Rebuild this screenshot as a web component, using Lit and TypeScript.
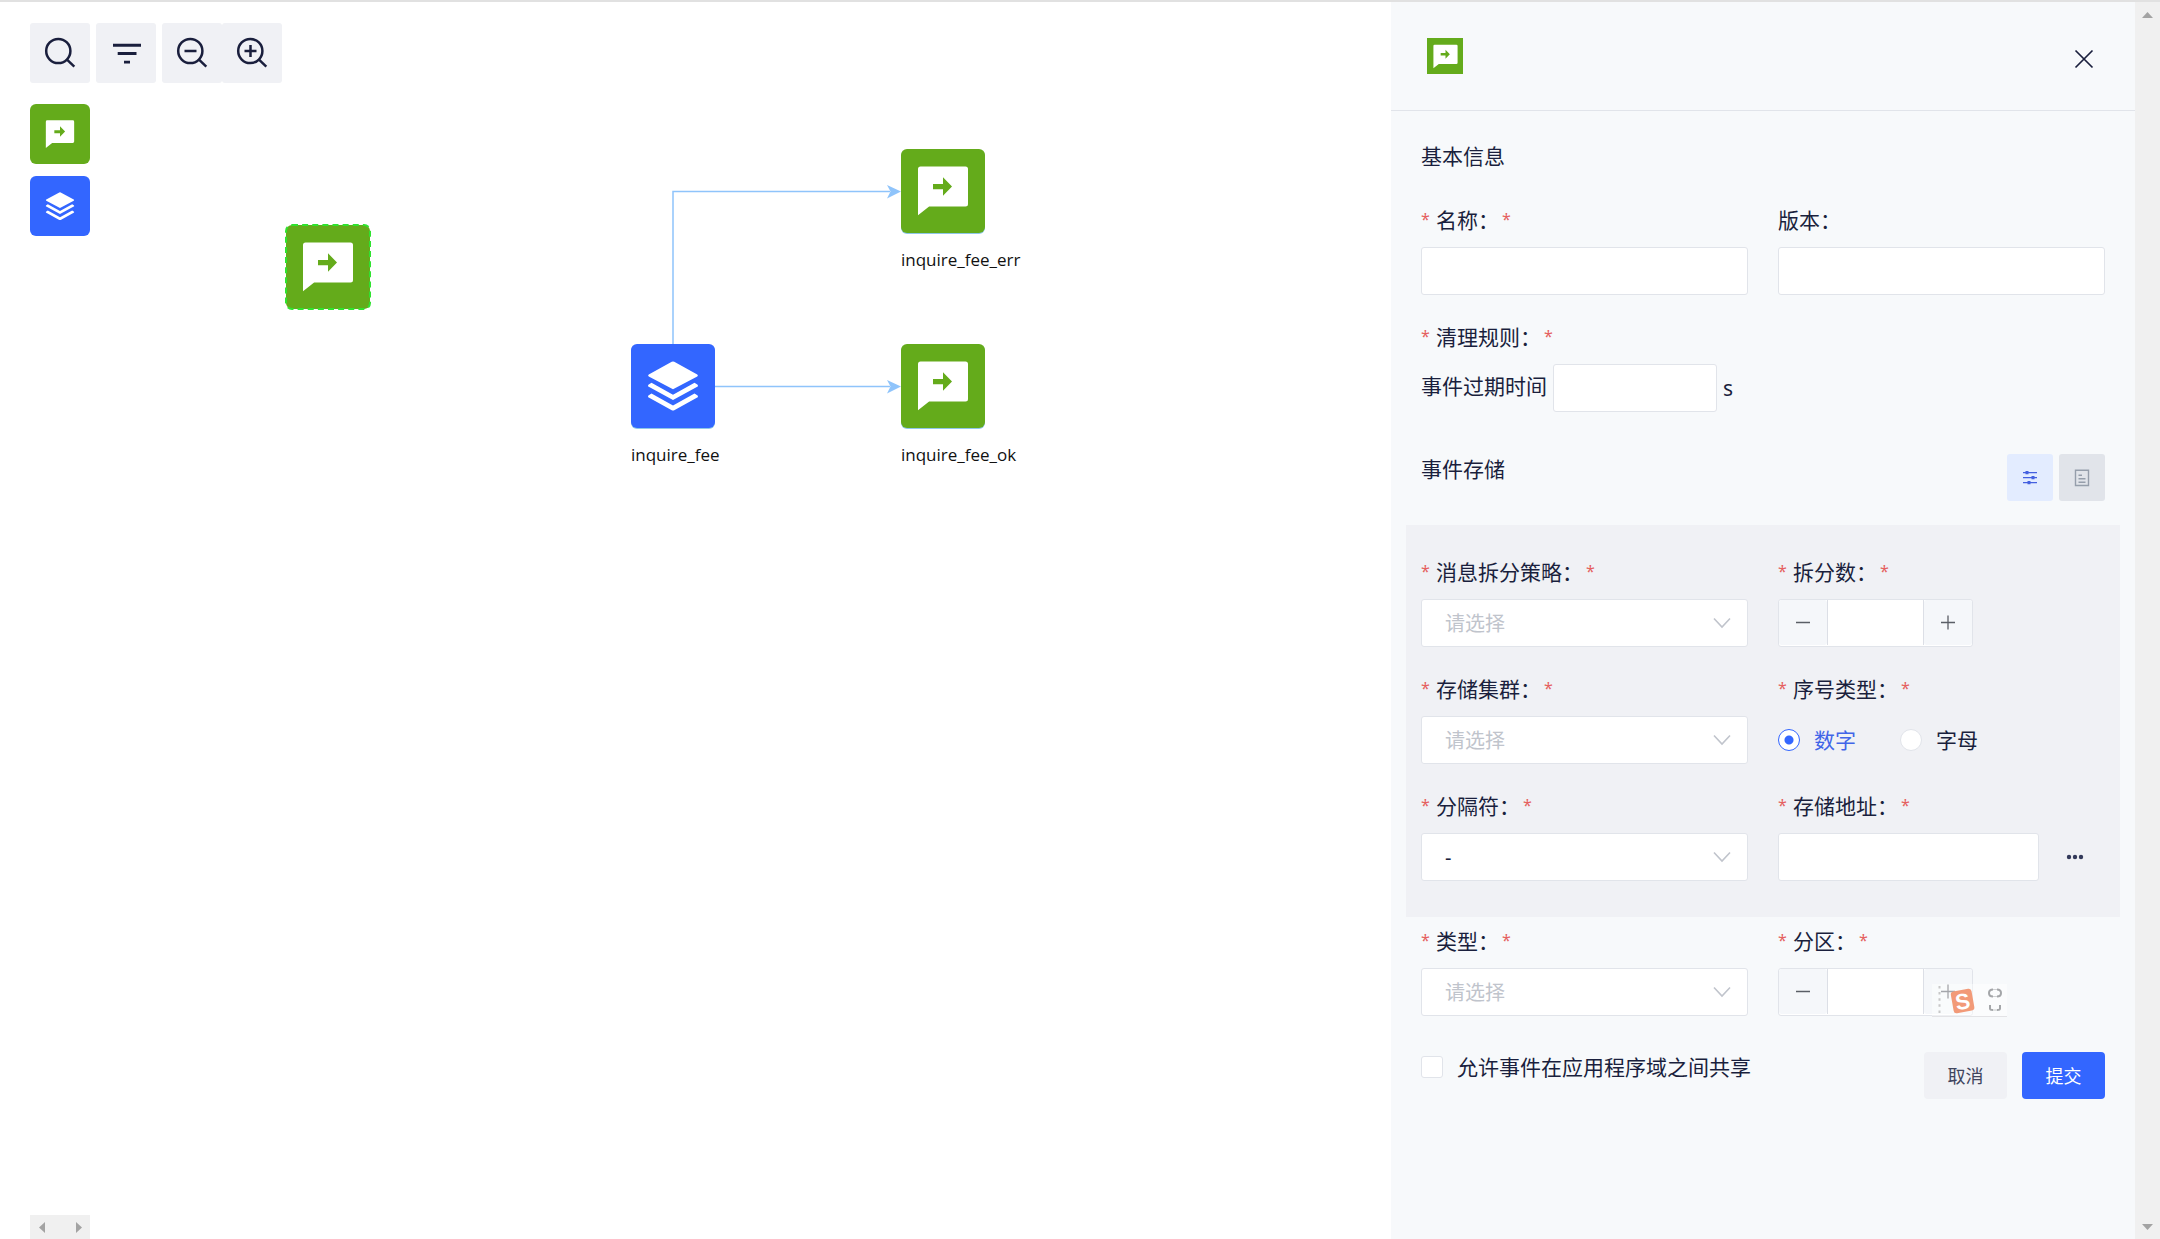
import { LitElement, html, svg, css, nothing, type TemplateResult } from "lit";
import { customElement, state } from "lit/decorators.js";
import { classMap } from "lit/directives/class-map.js";
import { styleMap } from "lit/directives/style-map.js";

type NodeKind = "event" | "stack";

interface FlowNode {
  kind: NodeKind;
  x: number;
  y: number;
  label?: string;
  ghost?: boolean;
}

const NODES: FlowNode[] = [
  { kind: "event", x: 286, y: 223, ghost: true },
  { kind: "event", x: 901, y: 147, label: "inquire_fee_err" },
  { kind: "stack", x: 631, y: 342, label: "inquire_fee" },
  { kind: "event", x: 901, y: 342, label: "inquire_fee_ok" },
];

const eventIcon = html`<svg viewBox="0 0 24 24" fill="currentColor" aria-hidden="true">
  <path fill-rule="evenodd" d="M6.45 19 2 22.5V4a1 1 0 0 1 1-1h18a1 1 0 0 1 1 1v14a1 1 0 0 1-1 1zM12 10H8v2.1h4v2.6L15.6 11 12 7.3z"/>
</svg>`;

const stackIcon = html`<svg viewBox="0 0 24 24" fill="currentColor" aria-hidden="true">
  <path d="M12.5 3.1l9.2 5.1a.5.5 0 0 1 0 .8L12 14.1 2.3 9a.5.5 0 0 1 0-.8l9.2-5.1a1 1 0 0 1 1 0z"/>
  <path d="M3.4 11.5 12 16.3l8.6-4.8 1.1.7a.5.5 0 0 1 0 .9L12 18.4 2.3 13.1a.5.5 0 0 1 0-.9z"/>
  <path d="M3.4 15.8 12 20.6l8.6-4.8 1.1.7a.5.5 0 0 1 0 .9l-9.2 5.1a1 1 0 0 1-1 0l-9.2-5.1a.5.5 0 0 1 0-.9z"/>
</svg>`;

const iconFor = (kind: NodeKind) => (kind === "event" ? eventIcon : stackIcon);

const lens = (inner: unknown = nothing) => html`<svg viewBox="0 0 60 60" fill="none" stroke="currentColor" stroke-width="2.5" aria-hidden="true">
  <circle cx="28.3" cy="28" r="12.1"/><path d="M37 36.7 44.3 43.7"/>${inner}
</svg>`;

const TOOLS: { name: string; icon: TemplateResult; joined?: boolean }[] = [
  { name: "搜索", icon: lens() },
  {
    name: "筛选",
    icon: html`<svg viewBox="0 0 60 60" fill="currentColor" aria-hidden="true">
      <path d="M17 20.8h28v2.9H17zM21.7 29.1h18.8V32H21.7zM28 37.7h6v2.9h-6z"/>
    </svg>`,
  },
  { name: "缩小", icon: lens(svg`<path d="M22.5 28h12"/>`) },
  { name: "放大", icon: lens(svg`<path d="M22.5 28h12M28.5 22v12"/>`), joined: true },
];

@customElement("app-root")
export class AppRoot extends LitElement {
  static styles = css`
    :host {
      display: grid;
      grid-template-columns: minmax(0, 1fr) clamp(480px, 35vw, 744px) 25px;
      min-height: 100vh;
      box-sizing: border-box;
      border-top: 2px solid #e1e1e1;
      background: #fff;
      color: #1a1f3d;
      font-family: "Noto Sans", "Noto Sans CJK SC", sans-serif;
      font-size: 21px;
      line-height: 30px;
    }
    * {
      box-sizing: border-box;
    }
    svg {
      display: block;
    }
    button {
      font: inherit;
      color: inherit;
      border: 0;
      padding: 0;
      display: flex;
      align-items: center;
      justify-content: center;
      cursor: pointer;
    }
    h2 {
      margin: 0;
      height: 32px;
      font-size: 21px;
      font-weight: 400;
    }

    .canvas {
      position: relative;
      display: flex;
      flex-direction: column;
      align-items: flex-start;
      padding: 21px 30px 0;
      overflow: hidden;
    }
    .toolbar {
      display: flex;
      gap: 6px;
    }
    .tool {
      width: 60px;
      height: 60px;
      background: #f0f1f5;
      border-radius: 3px;
    }
    .tool.joined {
      margin-left: -6px;
    }
    .tool svg {
      width: 60px;
      height: 60px;
    }
    .palette {
      display: flex;
      flex-direction: column;
      gap: 12px;
      margin-top: 21px;
    }
    .tile {
      display: flex;
      align-items: center;
      justify-content: center;
      color: #fff;
      background: #64ab1b;
      border-radius: 6px;
      width: 60px;
      height: 60px;
      padding-bottom: 2px;
    }
    .tile.stack {
      background: #3366ff;
    }
    .tile svg {
      width: 34px;
      height: 34px;
    }
    .edges {
      position: absolute;
      left: 0;
      top: 0;
      width: 1000px;
      height: 500px;
      pointer-events: none;
    }
    .node {
      position: absolute;
      color: #111;
      font-family: "Open Sans", "Noto Sans", sans-serif;
      font-size: 17px;
      line-height: 24px;
      white-space: nowrap;
    }
    .node .tile {
      width: 84px;
      height: 84px;
      margin-bottom: 15px;
      padding-bottom: 4px;
      box-shadow: 0 1px 0 #8fc8e8;
    }
    .node .tile svg {
      width: 60px;
      height: 60px;
    }
    .node.ghost .tile {
      outline: 2px dashed #2fe32f;
      outline-offset: -1px;
      box-shadow: none;
    }
    .mini-scroll {
      display: flex;
      justify-content: space-between;
      align-items: center;
      width: 60px;
      height: 24px;
      margin-top: auto;
      padding: 0 8px 0 9px;
      background: #f0f0f0;
      color: #a3a3a3;
    }
    .mini-scroll svg {
      width: 6px;
      height: 11px;
    }

    .panel {
      background: #f7f9fb;
    }
    .panel-head {
      display: flex;
      justify-content: space-between;
      align-items: flex-start;
      padding: 36px 30px 30px 36px;
      border-bottom: 1px solid #e1e4ea;
    }
    .panel-head .tile {
      width: 36px;
      height: 36px;
      border-radius: 0;
    }
    .panel-head .tile svg {
      width: 29px;
      height: 29px;
    }
    .close {
      width: 42px;
      height: 42px;
      background: none;
    }
    .close svg {
      width: 20px;
      height: 20px;
    }
    .form {
      padding: 30px 30px 0;
    }
    .fields {
      display: grid;
      grid-template-columns: repeat(2, minmax(0, 1fr));
      gap: 27px 30px;
    }
    .basic {
      margin-top: 32px;
    }
    .field {
      display: flex;
      flex-direction: column;
      gap: 10px;
    }
    .label {
      display: flex;
      height: 32px;
    }
    .label.required::before,
    .label.required::after {
      content: "*";
      width: 15px;
      color: #e56060;
      font-size: 16px;
      line-height: 28px;
    }
    .label.required::after {
      margin-left: 3px;
    }
    .text,
    .select {
      width: 100%;
      height: 48px;
      border: 1px solid #e1e4ea;
      border-radius: 3px;
      background: #fff;
      font: inherit;
      font-size: 20px;
      color: inherit;
      padding: 2px 23px 0;
      outline: none;
    }
    .select {
      appearance: none;
      grid-area: 1 / 1;
    }
    .select.empty {
      color: #c0c4cc;
    }
    .select-wrap {
      display: grid;
      align-items: center;
    }
    .select-wrap svg {
      grid-area: 1 / 1;
      justify-self: end;
      margin-right: 17px;
      width: 18px;
      height: 12px;
      color: #c0c4cc;
      pointer-events: none;
    }
    .inline {
      display: flex;
      align-items: center;
      gap: 6px;
    }
    .inline label {
      padding-bottom: 4px;
    }
    .inline .text {
      width: 164px;
    }
    .stepper {
      position: relative;
      display: flex;
      width: 195px;
      height: 48px;
      border: 1px solid #e1e4ea;
      border-radius: 3px;
      background: #fff;
    }
    .stepper button {
      flex: 0 0 48px;
      height: 45px;
      background: #f5f7fa;
      color: #5a5e66;
      border-radius: 3px;
    }
    .stepper svg {
      width: 16px;
      height: 16px;
    }
    .stepper input {
      flex: 1;
      min-width: 0;
      height: 45px;
      border: solid #dcdfe6;
      border-width: 0 1px;
      padding: 0;
      font: inherit;
      text-align: center;
      outline: none;
    }
    .stepper .ime {
      position: absolute;
      left: 153px;
      top: 15px;
      width: 75px;
      height: 33px;
      pointer-events: none;
    }
    .storage-head {
      display: flex;
      justify-content: space-between;
      align-items: flex-start;
      margin-top: 42px;
    }
    .modes {
      display: flex;
      gap: 6px;
    }
    .mode {
      width: 46px;
      height: 47px;
      border-radius: 3px;
      background: #e1e4ea;
      color: #959eab;
    }
    .mode.active {
      background: #e3ecff;
      color: #4460e0;
    }
    .mode svg {
      width: 16px;
      height: 18px;
    }
    .storage {
      margin: 24px -15px 9px;
      padding: 32px 15px 36px;
      background: #f0f1f5;
    }
    .radios {
      display: flex;
      align-items: center;
      gap: 44px;
      height: 47px;
    }
    .choice {
      display: flex;
      align-items: center;
      gap: 14px;
    }
    .choice input {
      appearance: none;
      flex: none;
      width: 22px;
      height: 22px;
      margin: 0;
      border: 1px solid #e1e4ea;
      background: #fff;
      border-radius: 3px;
    }
    .choice input[type="radio"] {
      border-radius: 50%;
    }
    .choice input[type="radio"]:checked {
      border-color: #3366ff;
      background: radial-gradient(circle, #3366ff 4px, #fff 5px);
    }
    .choice.on {
      color: #4165e8;
    }
    .address {
      display: flex;
      align-items: center;
      gap: 12px;
    }
    .address .text {
      flex: 1;
      min-width: 0;
    }
    .more {
      width: 48px;
      height: 48px;
      margin-right: 6px;
      background: none;
      color: #33395a;
    }
    .more svg {
      width: 18px;
      height: 6px;
    }
    .foot {
      display: flex;
      justify-content: space-between;
      align-items: flex-start;
      margin-top: 36px;
    }
    .actions {
      display: flex;
      gap: 15px;
    }
    .action {
      width: 83px;
      height: 47px;
      border-radius: 4px;
      background: #f0f1f5;
      color: #40455e;
      font-size: 18px;
    }
    .action.primary {
      background: #3366ff;
      color: #fff;
    }

    .scrollbar {
      display: flex;
      flex-direction: column;
      justify-content: space-between;
      align-items: center;
      padding: 10px 0 9px;
      background: #f0f0f0;
      color: #a3a3a3;
    }
    .scrollbar svg {
      width: 11px;
      height: 6px;
    }
  `;

  @state() private serial = "digit";
  @state() private counts: Record<string, string> = {};
  @state() private storageMode = 0;
  @state() private picks: Record<string, string> = { separator: "-" };

  private bump(id: string, delta: number) {
    const next = Math.max(0, (Number(this.counts[id]) || 0) + delta);
    this.counts = { ...this.counts, [id]: String(next) };
  }

  private label(text: string, id: string, required = true) {
    return html`<label class=${classMap({ label: true, required })} for=${id}>${text}</label>`;
  }

  private textField(text: string, id: string, required = true) {
    return html`<div class="field">${this.label(text, id, required)}<input class="text" id=${id} type="text" /></div>`;
  }

  private selectField(text: string, id: string, options: string[] = []) {
    const value = this.picks[id] ?? "";
    return html`<div class="field">
      ${this.label(text, id)}
      <div class="select-wrap">
        <select
          class=${classMap({ select: true, empty: !value })}
          id=${id}
          @change=${(e: Event) => (this.picks = { ...this.picks, [id]: (e.target as HTMLSelectElement).value })}
        >
          ${options.length ? nothing : html`<option value="">请选择</option>`}
          ${options.map((o) => html`<option value=${o} ?selected=${o === value}>${o}</option>`)}
        </select>
        <svg viewBox="0 0 18 12" fill="none" stroke="currentColor" stroke-width="1.6" aria-hidden="true"><path d="M1 1.5l8 8.5 8-8.5"/></svg>
      </div>
    </div>`;
  }

  private stepField(text: string, id: string, overlay: unknown = nothing) {
    return html`<div class="field">
      ${this.label(text, id)}
      <div class="stepper">
        <button type="button" aria-label="减少" @click=${() => this.bump(id, -1)}>
          <svg viewBox="0 0 16 16" fill="none" stroke="currentColor" stroke-width="1.5"><path d="M1 7.5h14"/></svg>
        </button>
        <input id=${id} type="text" inputmode="numeric" .value=${this.counts[id] ?? ""} />
        <button type="button" aria-label="增加" @click=${() => this.bump(id, 1)}>
          <svg viewBox="0 0 16 16" fill="none" stroke="currentColor" stroke-width="1.3"><path d="M1 7.5h14M8 .5v14"/></svg>
        </button>
        ${overlay}
      </div>
    </div>`;
  }

  private imeBar() {
    return html`<svg class="ime" viewBox="0 0 75 33" aria-hidden="true">
      <rect width="75" height="32" fill="#fff" opacity=".45"/>
      <path d="M0 32.5h75" stroke="#e3e3e6"/>
      <path d="M7.500 2v30" stroke="#c8c8c8" stroke-width="2" stroke-dasharray="2.5 3.6"/>
      <g transform="rotate(-10 30.5 16.5)">
        <rect x="20" y="6" width="21" height="22" rx="3" fill="#f29a78"/>
        <text x="30.5" y="25" text-anchor="middle" font-family="Liberation Sans, sans-serif" font-weight="700" font-size="22" fill="#fff">S</text>
      </g>
      <g fill="none" stroke="#a4a6a9" stroke-width="2">
        <path d="M61 5.500q-4 0-4 3.500t4 3.500M65 5.500q4 0 4 3.500t-4 3.500"/>
        <path d="M61 5.500h4M61 12.500h4" stroke-width="1" opacity=".5"/>
        <path d="M58 21v3.500q0 1.500 3 1.500M68 21v3.500q0 1.500-3 1.500"/>
        <path d="M61 26h4" stroke-width="1" opacity=".6"/>
      </g>
    </svg>`;
  }

  private renderNode(n: FlowNode) {
    return html`<div
      class=${classMap({ node: true, ghost: !!n.ghost })}
      style=${styleMap({ left: `${n.x}px`, top: `${n.y}px` })}
    >
      <div class=${classMap({ tile: true, stack: n.kind === "stack" })}>${iconFor(n.kind)}</div>
      ${n.label ?? nothing}
    </div>`;
  }

  private renderCanvas() {
    return html`<main class="canvas">
      <div class="toolbar">
        ${TOOLS.map(
          (t) => html`<button type="button" class=${classMap({ tool: true, joined: !!t.joined })} aria-label=${t.name}>${t.icon}</button>`
        )}
      </div>
      <div class="palette">
        <div class="tile">${eventIcon}</div>
        <div class="tile stack">${stackIcon}</div>
      </div>
      <svg class="edges" viewBox="0 0 1000 500" aria-hidden="true">
        <path d="M673 342V189.500H890M715 384.500H890" fill="none" stroke="#8fc4fb" stroke-width="1.5"/>
        <path d="M887 183l14 6.500-14 7 3.500-7zM887 378l14 6.500-14 7 3.500-7z" fill="#8fc4fb"/>
      </svg>
      ${NODES.map((n) => this.renderNode(n))}
      <div class="mini-scroll">
        <svg viewBox="0 0 6 11" fill="currentColor"><path d="M6 0v11L0 5.500z"/></svg>
        <svg viewBox="0 0 6 11" fill="currentColor"><path d="M0 0v11l6-5.500z"/></svg>
      </div>
    </main>`;
  }

  private radio(value: string, text: string) {
    const on = this.serial === value;
    return html`<label class=${classMap({ choice: true, on })}>
      <input type="radio" name="serial" .checked=${on} @change=${() => (this.serial = value)} />${text}
    </label>`;
  }

  private mode(index: number, name: string, icon: TemplateResult) {
    return html`<button
      type="button"
      class=${classMap({ mode: true, active: this.storageMode === index })}
      aria-label=${name}
      @click=${() => (this.storageMode = index)}
    >${icon}</button>`;
  }

  render() {
    return html`
      ${this.renderCanvas()}
      <aside class="panel">
        <header class="panel-head">
          <div class="tile">${eventIcon}</div>
          <button type="button" class="close" aria-label="关闭">
            <svg viewBox="0 0 20 20" fill="none" stroke="currentColor" stroke-width="1.7"><path d="M1.500 1.500l17 17M18.500 1.500l-17 17"/></svg>
          </button>
        </header>
        <form class="form" @submit=${(e: Event) => e.preventDefault()}>
          <h2>基本信息</h2>
          <div class="fields basic">
            ${this.textField("名称：", "name")} ${this.textField("版本：", "version", false)}
            <div class="field">
              ${this.label("清理规则：", "expire")}
              <div class="inline">
                <label for="expire">事件过期时间</label>
                <input class="text" id="expire" type="text" />
                <span>s</span>
              </div>
            </div>
          </div>
          <div class="storage-head">
            <h2>事件存储</h2>
            <div class="modes">
              ${this.mode(0, "表单", html`<svg viewBox="0 0 16 18" fill="currentColor"><path d="M1 3h14v1.200H1zM1 8h14v1.200H1zM1 13h14v1.200H1zM3.500 2h3v3.200h-3zM9.500 7h3v3.200h-3zM5.500 12h3v3.200h-3z"/></svg>`)}
              ${this.mode(1, "文档", html`<svg viewBox="0 0 16 18" fill="none" stroke="currentColor" stroke-width="1.4"><path d="M1.500 1.200h13v15.300h-13zM4.500 6.300h3.500M4.500 9.800h7M4.500 13.200h7"/></svg>`)}
            </div>
          </div>
          <section class="storage fields">
            ${this.selectField("消息拆分策略：", "strategy")} ${this.stepField("拆分数：", "splits")}
            ${this.selectField("存储集群：", "cluster")}
            <div class="field">
              <span class="label required" id="serial-label">序号类型：</span>
              <div class="radios" role="radiogroup" aria-labelledby="serial-label">
                ${this.radio("digit", "数字")} ${this.radio("letter", "字母")}
              </div>
            </div>
            ${this.selectField("分隔符：", "separator", ["-"])}
            <div class="field">
              ${this.label("存储地址：", "address")}
              <div class="address">
                <input class="text" id="address" type="text" />
                <button type="button" class="more" aria-label="更多">
                  <svg viewBox="0 0 18 6" fill="currentColor"><circle cx="3" cy="3" r="2.200"/><circle cx="9" cy="3" r="2.200"/><circle cx="15" cy="3" r="2.200"/></svg>
                </button>
              </div>
            </div>
          </section>
          <div class="fields">
            ${this.selectField("类型：", "type")} ${this.stepField("分区：", "partitions", this.imeBar())}
          </div>
          <footer class="foot">
            <label class="choice"><input type="checkbox" />允许事件在应用程序域之间共享</label>
            <div class="actions">
              <button type="button" class="action">取消</button>
              <button type="submit" class="action primary">提交</button>
            </div>
          </footer>
        </form>
      </aside>
      <div class="scrollbar" aria-hidden="true">
        <svg viewBox="0 0 11 6" fill="currentColor"><path d="M0 6h11L5.500 0z"/></svg>
        <svg viewBox="0 0 11 6" fill="currentColor"><path d="M0 0h11L5.500 6z"/></svg>
      </div>
    `;
  }
}
